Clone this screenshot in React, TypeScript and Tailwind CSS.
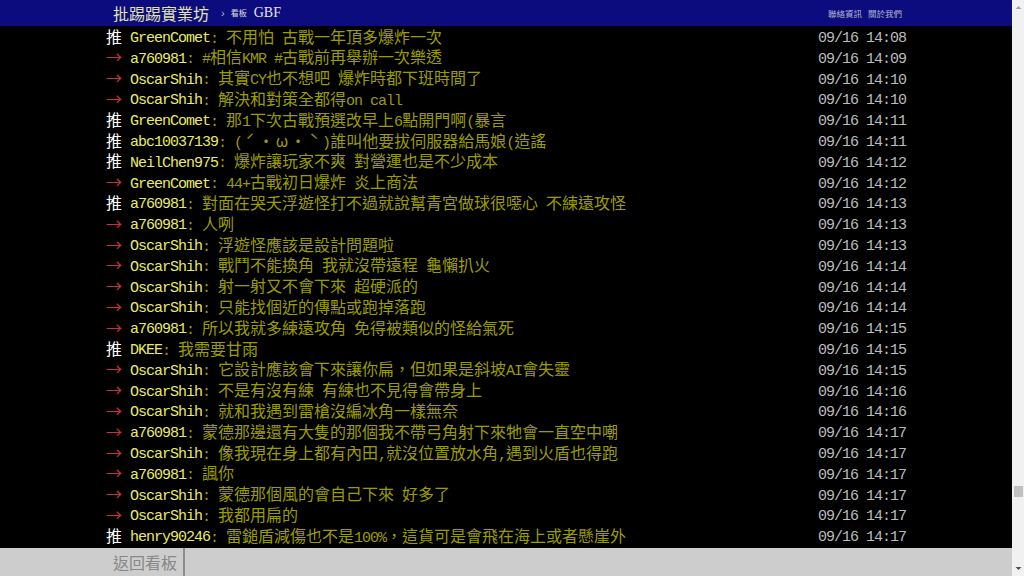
import React from "react";

// PTT style push list: half-width latin is 8px, full-width CJK is 16px
type Push = { tag: "推" | "→"; user: string; text: string; time: string };

const pushes: Push[] = [
  { tag: "推", user: "GreenComet", text: "不用怕 古戰一年頂多爆炸一次", time: "09/16 14:08" },
  { tag: "→", user: "a760981", text: "#相信KMR #古戰前再舉辦一次樂透", time: "09/16 14:09" },
  { tag: "→", user: "OscarShih", text: "其實CY也不想吧 爆炸時都下班時間了", time: "09/16 14:10" },
  { tag: "→", user: "OscarShih", text: "解決和對策全都得on call", time: "09/16 14:10" },
  { tag: "推", user: "GreenComet", text: "那1下次古戰預選改早上6點開門啊(暴言", time: "09/16 14:11" },
  { tag: "推", user: "abc10037139", text: "(ˊ・ω・ˋ)誰叫他要拔伺服器給馬娘(造謠", time: "09/16 14:11" },
  { tag: "推", user: "NeilChen975", text: "爆炸讓玩家不爽 對營運也是不少成本", time: "09/16 14:12" },
  { tag: "→", user: "GreenComet", text: "44+古戰初日爆炸 炎上商法", time: "09/16 14:12" },
  { tag: "推", user: "a760981", text: "對面在哭夭浮遊怪打不過就說幫青宮做球很噁心 不練遠攻怪", time: "09/16 14:13" },
  { tag: "→", user: "a760981", text: "人咧", time: "09/16 14:13" },
  { tag: "→", user: "OscarShih", text: "浮遊怪應該是設計問題啦", time: "09/16 14:13" },
  { tag: "→", user: "OscarShih", text: "戰鬥不能換角 我就沒帶遠程 龜懶扒火", time: "09/16 14:14" },
  { tag: "→", user: "OscarShih", text: "射一射又不會下來 超硬派的", time: "09/16 14:14" },
  { tag: "→", user: "OscarShih", text: "只能找個近的傳點或跑掉落跑", time: "09/16 14:14" },
  { tag: "→", user: "a760981", text: "所以我就多練遠攻角 免得被類似的怪給氣死", time: "09/16 14:15" },
  { tag: "推", user: "DKEE", text: "我需要甘雨", time: "09/16 14:15" },
  { tag: "→", user: "OscarShih", text: "它設計應該會下來讓你扁，但如果是斜坡AI會失靈", time: "09/16 14:15" },
  { tag: "→", user: "OscarShih", text: "不是有沒有練 有練也不見得會帶身上", time: "09/16 14:16" },
  { tag: "→", user: "OscarShih", text: "就和我遇到雷槍沒編冰角一樣無奈", time: "09/16 14:16" },
  { tag: "→", user: "a760981", text: "蒙德那邊還有大隻的那個我不帶弓角射下來牠會一直空中嘲", time: "09/16 14:17" },
  { tag: "→", user: "OscarShih", text: "像我現在身上都有內田,就沒位置放水角,遇到火盾也得跑", time: "09/16 14:17" },
  { tag: "→", user: "a760981", text: "諷你", time: "09/16 14:17" },
  { tag: "→", user: "OscarShih", text: "蒙德那個風的會自己下來 好多了", time: "09/16 14:17" },
  { tag: "→", user: "OscarShih", text: "我都用扁的", time: "09/16 14:17" },
  { tag: "推", user: "henry90246", text: "雷鎚盾減傷也不是100%，這貨可是會飛在海上或者懸崖外", time: "09/16 14:17" },
];

// split a string into half-width (mono) and full-width (CJK) runs
function Txt({ s }: { s: string }) {
  const parts: { k: "a" | "c" | "w"; t: string }[] = [];
  for (const ch of s) {
    const c = ch.codePointAt(0) ?? 0;
    const k = c < 128 ? "a" : c >= 0x2e80 ? "c" : "w";
    const last = parts[parts.length - 1];
    if (last && last.k === k && k !== "w") last.t += ch;
    else parts.push({ k, t: ch });
  }
  return (
    <>
      {parts.map((p, i) =>
        p.k === "a" ? (
          <span key={i} className="font-['Liberation_Mono',monospace] text-[15px] tracking-[-1px]">
            {p.t}
          </span>
        ) : p.k === "c" ? (
          <span key={i} className="font-['Noto_Sans_CJK_TC',sans-serif]">
            {p.t}
          </span>
        ) : (
          <span key={i} className="inline-block w-4 text-center font-['Noto_Sans_CJK_TC',sans-serif]">
            {p.t}
          </span>
        )
      )}
    </>
  );
}

function PushRow({ p }: { p: Push }) {
  return (
    <div className="flex h-[20.8px] items-center whitespace-pre text-[16px] leading-[20.8px]">
      <span className={p.tag === "推" ? "text-white" : "text-[#c43440]"}>
        <Txt s={p.tag + " "} />
      </span>
      <span className="text-[#eaea66]">
        <Txt s={p.user} />
      </span>
      <span className="text-[#9c9c00]">
        <Txt s={": " + p.text} />
      </span>
      <span className="ml-auto text-[#bbbbbb]">
        <Txt s={" " + p.time} />
      </span>
    </div>
  );
}

function Scrollbar() {
  return (
    <div className="flex w-[12px] flex-col items-center bg-[#f1f1f1]">
      <svg width="7" height="12" viewBox="0 0 7 12" className="mt-[2px]">
        <path d="M0.5 7 L3.5 4 L6.5 7 Z" fill="#a3a3a3" />
      </svg>
      <div className="mt-[472px] h-[11px] w-[9px] bg-[#c1c1c1]" />
      <div className="flex-1" />
      <svg width="7" height="12" viewBox="0 0 7 12" className="mb-[2px]">
        <path d="M0.5 5 L3.5 8 L6.5 5 Z" fill="#505050" />
      </svg>
    </div>
  );
}

export default function App() {
  return (
    <div className="flex h-[576px] w-[1024px] overflow-hidden bg-black">
      <div className="flex flex-1 flex-col">
        {/* top bar */}
        <div className="h-[26px] shrink-0 bg-[#0c0c7e]">
          <div className="mx-auto flex h-full w-[800px] items-center pl-[7px] pr-[4px]">
            <span className="font-['Noto_Sans_CJK_TC',sans-serif] text-[16px] leading-none text-[#e2e2ac]">
              批踢踢實業坊
            </span>
            <span className="ml-[12px] font-['Liberation_Sans',sans-serif] text-[11px] leading-none text-[#b8b8c8]">
              ›
            </span>
            <span className="ml-[6px] font-['Noto_Sans_CJK_TC',sans-serif] text-[8px] leading-none text-[#dddddd]">
              看板
            </span>
            <span className="ml-[7px] font-['Liberation_Serif',serif] text-[14px] leading-none text-[#e6e6e6]">
              GBF
            </span>
            <div className="ml-auto flex gap-[6px] font-['Noto_Sans_CJK_TC',sans-serif] text-[8.5px] leading-none text-[#b4b4d4]">
              <span>聯絡資訊</span>
              <span>關於我們</span>
            </div>
          </div>
        </div>

        {/* pushes */}
        <div className="flex-1">
          <div className="mx-auto w-[800px] pt-[1.6px]">
            {pushes.map((p, i) => (
              <PushRow key={i} p={p} />
            ))}
          </div>
        </div>

        {/* bottom bar */}
        <div className="h-[28px] shrink-0 bg-[#cdcdcd]">
          <div className="mx-auto flex h-full w-[800px]">
            <div className="flex h-full items-center border-r-2 border-[#8c8c8c] pl-[7px] pr-[6px] font-['Noto_Sans_CJK_TC',sans-serif] text-[16px] leading-none text-[#888888]">
              返回看板
            </div>
          </div>
        </div>
      </div>
      <Scrollbar />
    </div>
  );
}
